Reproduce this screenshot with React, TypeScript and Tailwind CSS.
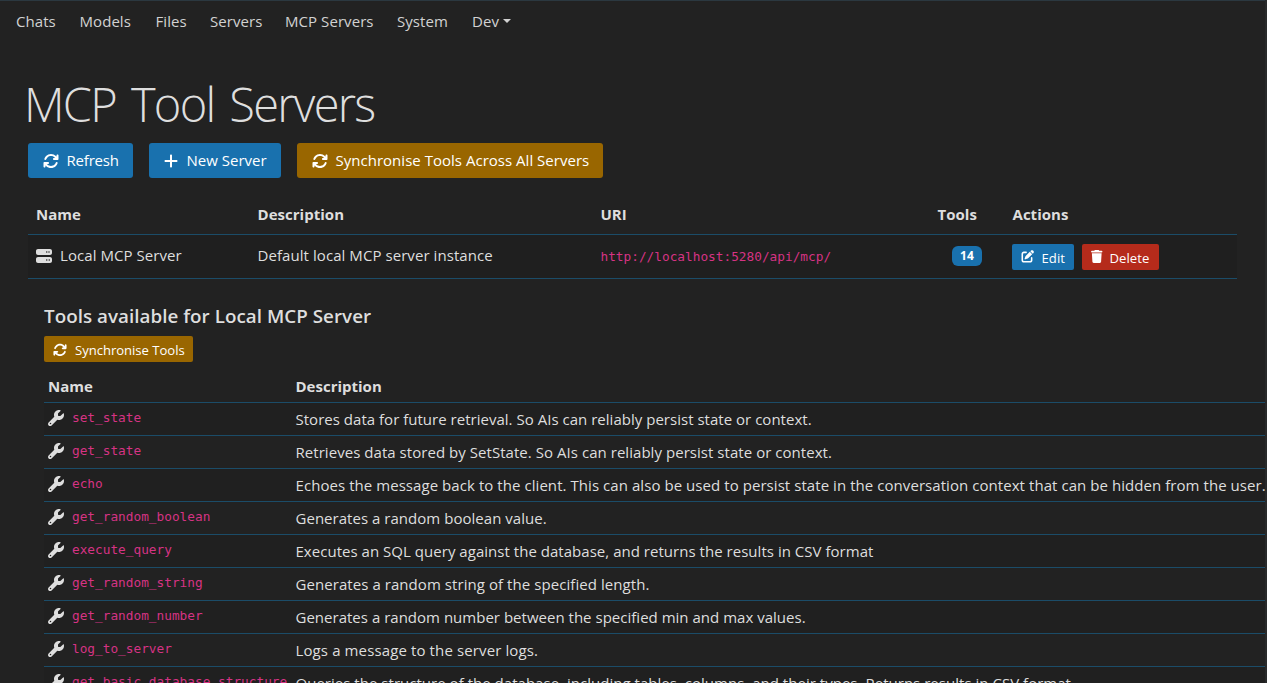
import type { ReactNode } from "react";
import { FaArrowsRotate, FaPenToSquare, FaPlus, FaServer, FaTrash, FaWrench } from "react-icons/fa6";

const navItems = [
  { label: "Chats", width: "w-[63.5px]" },
  { label: "Models", width: "w-[76px]" },
  { label: "Files", width: "w-[54.5px]" },
  { label: "Servers", width: "w-[75px]" },
  { label: "MCP Servers", width: "w-[112px]" },
  { label: "System", width: "w-[75px]" },
];

const tools = [
  {
    name: "set_state",
    tracking: "tracking-[0.02px]",
    description: "Stores data for future retrieval. So AIs can reliably persist state or context.",
  },
  {
    name: "get_state",
    tracking: "tracking-[0.045px]",
    description: "Retrieves data stored by SetState. So AIs can reliably persist state or context.",
  },
  {
    name: "echo",
    tracking: "tracking-[0.06px]",
    description:
      "Echoes the message back to the client. This can also be used to persist state in the conversation context that can be hidden from the user.",
  },
  { name: "get_random_boolean", tracking: "tracking-[0.03px]", description: "Generates a random boolean value." },
  {
    name: "execute_query",
    tracking: "tracking-[0.03px]",
    description: "Executes an SQL query against the database, and returns the results in CSV format",
  },
  {
    name: "get_random_string",
    tracking: "tracking-[0.065px]",
    description: "Generates a random string of the specified length.",
  },
  {
    name: "get_random_number",
    tracking: "tracking-[0.015px]",
    description: "Generates a random number between the specified min and max values.",
  },
  { name: "log_to_server", tracking: "tracking-[0.12px]", description: "Logs a message to the server logs." },
  {
    name: "get_basic_database_structure",
    tracking: "tracking-[0.025px]",
    description:
      "Queries the structure of the database, including tables, columns, and their types. Returns results in CSV format",
  },
];

function Code({ children }: { children: ReactNode }) {
  return (
    <code className="font-['DejaVu_Sans_Mono',monospace] text-[12.78px] tracking-normal text-[#d63384]">{children}</code>
  );
}

function Navbar() {
  return (
    <nav className="flex h-[42px] shrink-0 items-center border-t border-[#2b3840] pb-[2px] pl-4 text-[#d2d2d2]">
      {navItems.map((item) => (
        <a key={item.label} className={`${item.width} shrink-0`}>
          {item.label}
        </a>
      ))}
      <a className="flex items-center gap-1">
        Dev
        <span className="border-x-[4px] border-t-[4px] border-x-transparent border-t-current" />
      </a>
    </nav>
  );
}

function LargeButton({ icon, color, children }: { icon: ReactNode; color: string; children: ReactNode }) {
  return (
    <button className={`flex h-[35px] items-center gap-[7.5px] rounded-[3px] text-white ${color}`}>
      <span className="text-base">{icon}</span>
      <span className="mb-[2px] whitespace-nowrap">{children}</span>
    </button>
  );
}

function SmallButton({ icon, color, children }: { icon: ReactNode; color: string; children: ReactNode }) {
  return (
    <button className={`flex h-[26px] items-center rounded-[2px] pl-[9px] text-[13.1px] text-white ${color}`}>
      {icon}
      <span className="mt-[2px] whitespace-nowrap">{children}</span>
    </button>
  );
}

export default function App() {
  return (
    <div className="flex h-[683px] w-full flex-col overflow-hidden border-r-2 border-[#282a2b] bg-[#222] font-['Open_Sans',sans-serif] text-[15px] leading-6 tracking-[0.065px] text-[#dedede]">
      <Navbar />
      <main className="flex min-h-0 flex-1 flex-col pl-7 pt-[34px]">
        <h1 className="-ml-1 h-[67px] shrink-0 text-[47px] leading-[56px] font-light tracking-[-1.75px] [word-spacing:4.5px]">
          MCP Tool Servers
        </h1>
        <div className="flex shrink-0 gap-4">
          <LargeButton icon={<FaArrowsRotate />} color="w-[105px] bg-[#1971ae] pl-[15px] tracking-[-0.2px]">
            Refresh
          </LargeButton>
          <LargeButton icon={<FaPlus />} color="w-[132px] bg-[#1971ae] pl-[14px] tracking-normal">
            New Server
          </LargeButton>
          <LargeButton icon={<FaArrowsRotate />} color="w-[306px] bg-[#996600] pl-[15px] tracking-[0.02px]">
            Synchronise Tools Across All Servers
          </LargeButton>
        </div>

        <section className="mt-[17px] w-[1209px]">
          <div className="grid h-10 grid-cols-[221.5px_343px_337px_75px_1fr] items-center border-b border-[#1b4c68] pb-px pl-2 font-bold tracking-[0.03px]">
            <span>Name</span>
            <span>Description</span>
            <span>URI</span>
            <span>Tools</span>
            <span>Actions</span>
          </div>
          <div className="grid h-11 grid-cols-[221.5px_343px_337px_74.5px_1fr] items-center border-b border-[#1b4c68] bg-[#1f1f1f] pl-2">
            <span className="flex items-center gap-2 pb-[3px]">
              <FaServer className="mt-px text-base" />
              Local MCP Server
            </span>
            <span className="pb-[3px]">Default local MCP server instance</span>
            <Code>http://localhost:5280/api/mcp/</Code>
            <span className="mb-[2px] ml-[14.5px] flex h-5 w-[30px] items-center justify-center rounded-[6px] bg-[#1971ae] text-xs font-bold text-white">
              14
            </span>
            <span className="flex gap-2">
              <SmallButton icon={<FaPenToSquare className="mr-[7px] w-[13.5px] text-[12.5px]" />} color="w-[62px] bg-[#1971ae]">
                Edit
              </SmallButton>
              <SmallButton icon={<FaTrash className="mr-[7px] w-[11.5px] text-[13px]" />} color="w-[77px] bg-[#b52b1b]">
                Delete
              </SmallButton>
            </span>
          </div>
        </section>

        <section className="ml-4 pt-[25px]">
          <h5 className="h-8 text-[18.8px] leading-6 font-semibold tracking-[0.04px]">
            Tools available for Local MCP Server
          </h5>
          <SmallButton
            icon={<FaArrowsRotate className="mt-px mr-2 text-sm" />}
            color="w-[149px] bg-[#996600] tracking-[-0.03px]"
          >
            Synchronise Tools
          </SmallButton>
          <div className="mt-2 grid h-[33px] grid-cols-[247.5px_1fr] items-center border-b border-[#1b4c68] pl-1 font-bold tracking-normal">
            <span>Name</span>
            <span>Description</span>
          </div>
          {tools.map((tool, index) => (
            <div
              key={tool.name}
              className={`grid h-[33px] grid-cols-[247.5px_1fr] items-center border-b border-[#1b4c68] pl-1 ${index % 2 === 0 ? "bg-[#202020]" : ""}`}
            >
              <span className="-mt-[2px] flex items-center gap-2">
                <FaWrench className="text-base" />
                <Code>{tool.name}</Code>
              </span>
              <span className={`whitespace-nowrap ${tool.tracking}`}>{tool.description}</span>
            </div>
          ))}
        </section>
      </main>
    </div>
  );
}
